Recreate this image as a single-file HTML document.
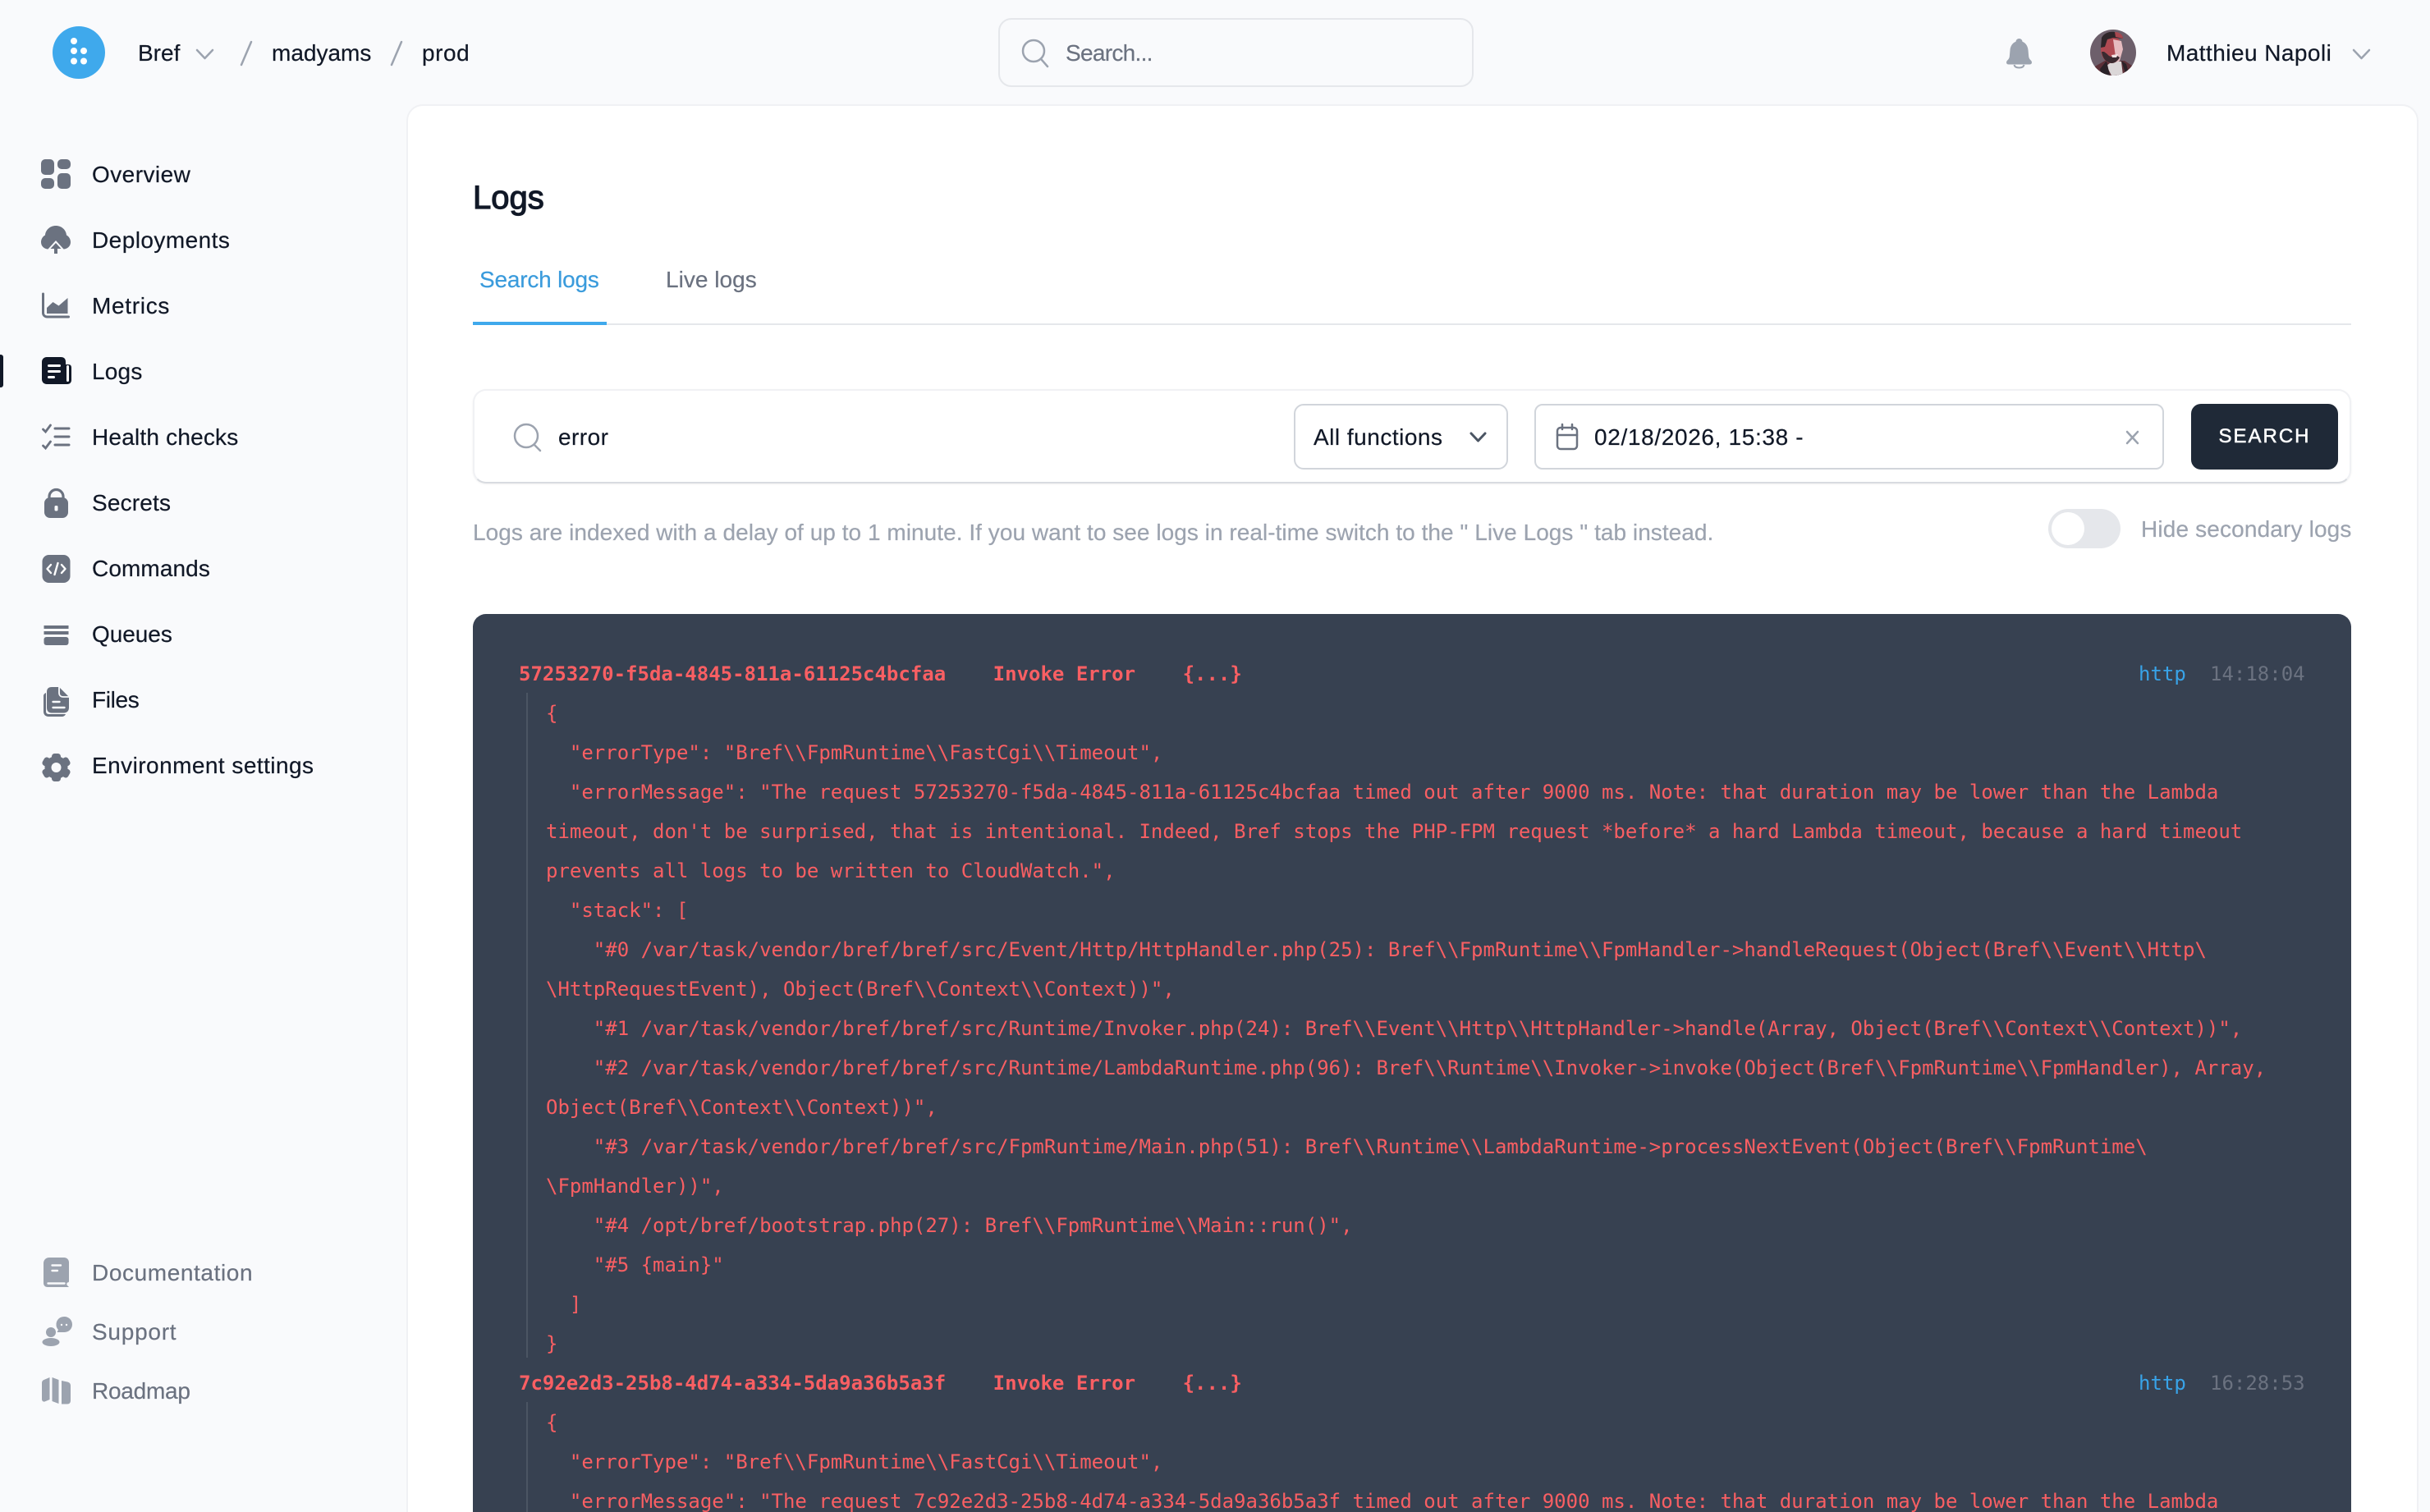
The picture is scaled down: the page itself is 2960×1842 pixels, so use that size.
<!DOCTYPE html>
<html lang="en"><head><meta charset="utf-8"><title>Logs</title>
<style>
html,body{margin:0;padding:0;width:2960px;height:1842px;overflow:hidden;background:#f9fafc;font-family:"Liberation Sans",sans-serif;color:#111827}
#w{position:relative;width:2960px;height:1842px;overflow:hidden}
.t{position:absolute;white-space:pre;line-height:40px;height:40px;font-size:28px;letter-spacing:.45px;-webkit-text-stroke:.2px currentColor}
.b{position:absolute;box-sizing:border-box}
#ic{position:absolute;left:0;top:0;z-index:5}
.g{color:#6b7280}
.mono{position:absolute;font:24px/48px "DejaVu Sans Mono","Liberation Mono",monospace;color:#f95f63;white-space:pre;margin:0}
.mono b{font-weight:700}
.gap{display:inline-block;width:57.5px}
.r{position:absolute;font:24px/48px "DejaVu Sans Mono","Liberation Mono",monospace;white-space:pre}
</style></head><body><div id="w">
<div class="b" style="left:495px;top:127px;width:2451px;height:1715px;background:#fff;border:2px solid #f0f1f4;border-bottom:0;border-radius:20px 20px 0 0"></div>

<div class="t" style="left:168px;top:45px;letter-spacing:0">Bref</div>
<div class="t" style="left:331px;top:45px;letter-spacing:0">madyams</div>
<div class="t" style="left:514px;top:45px;letter-spacing:.55px">prod</div>
<div class="b" style="left:1216px;top:22px;width:579px;height:84px;border:2px solid #e5e7eb;border-radius:16px"></div>
<div class="t g" style="left:1298px;top:45px;letter-spacing:-.7px">Search...</div>
<div class="t" style="left:2639px;top:45px">Matthieu Napoli</div>

<div class="t" style="left:112px;top:193px">Overview</div>
<div class="t" style="left:112px;top:273px">Deployments</div>
<div class="t" style="left:112px;top:353px;letter-spacing:.7px">Metrics</div>
<div class="t" style="left:112px;top:433px;letter-spacing:.2px">Logs</div>
<div class="t" style="left:112px;top:513px;letter-spacing:.2px">Health checks</div>
<div class="t" style="left:112px;top:593px;letter-spacing:.17px">Secrets</div>
<div class="t" style="left:112px;top:673px;letter-spacing:.1px">Commands</div>
<div class="t" style="left:112px;top:753px;letter-spacing:-.05px">Queues</div>
<div class="t" style="left:112px;top:833px;letter-spacing:-.35px">Files</div>
<div class="t" style="left:112px;top:913px">Environment settings</div>
<div class="t g" style="left:112px;top:1531px;letter-spacing:.6px">Documentation</div>
<div class="t g" style="left:112px;top:1603px;letter-spacing:.75px">Support</div>
<div class="t g" style="left:112px;top:1675px;letter-spacing:-.25px">Roadmap</div>
<div class="b" style="left:0;top:432px;width:4px;height:40px;background:#111827;border-radius:0 3px 3px 0"></div>

<div class="t" style="left:576px;top:221px;font-size:40px;letter-spacing:0;-webkit-text-stroke:1.2px #111827">Logs</div>
<div class="t" style="left:584px;top:321px;color:#3a9bdc;letter-spacing:-.2px">Search logs</div>
<div class="t g" style="left:811px;top:321px;letter-spacing:.03px">Live logs</div>
<div class="b" style="left:576px;top:394px;width:2288px;height:2px;background:#e5e7eb"></div>
<div class="b" style="left:576px;top:392px;width:163px;height:4px;background:#3fa9ec"></div>

<div class="b" style="left:576px;top:474px;width:2288px;height:115px;background:#fff;border:2px solid #f0f1f4;border-bottom-color:#d8dbe0;border-radius:16px;box-shadow:0 1px 2px rgba(0,0,0,.06)"></div>
<div class="t" style="left:680px;top:513px">error</div>
<div class="b" style="left:1576px;top:492px;width:261px;height:80px;border:2px solid #d1d5db;border-radius:12px"></div>
<div class="t" style="left:1600px;top:513px;letter-spacing:.5px">All functions</div>
<div class="b" style="left:1869px;top:492px;width:767px;height:80px;border:2px solid #d1d5db;border-radius:10px"></div>
<div class="t" style="left:1942px;top:513px;letter-spacing:.65px">02/18/2026, 15:38 -</div>
<div class="b" style="left:2669px;top:492px;width:179px;height:80px;background:#1f2937;border-radius:12px"></div>
<div class="t" style="left:2669px;width:179px;text-align:center;top:512px;color:#fff;font-size:24px;letter-spacing:2px;-webkit-text-stroke:.5px #fff">SEARCH</div>

<div class="t" style="left:576px;top:629px;color:#9ca3af;letter-spacing:.04px">Logs are indexed with a delay of up to 1 minute. If you want to see logs in real-time switch to the " Live Logs " tab instead.</div>
<div class="b" style="left:2495px;top:620px;width:88px;height:48px;background:#e5e7eb;border-radius:24px"></div>
<div class="b" style="left:2499px;top:624px;width:40px;height:40px;background:#fff;border-radius:50%"></div>
<div class="t" style="left:2608px;top:625px;color:#9ca3af;letter-spacing:.15px">Hide secondary logs</div>

<div class="b" style="left:576px;top:748px;width:2288px;height:1094px;background:#374151;border-radius:16px 16px 0 0"></div>
<div class="b" style="left:641px;top:844px;width:2px;height:810px;background:#4b5563"></div>
<div class="b" style="left:641px;top:1708px;width:2px;height:134px;background:#4b5563"></div>

<pre class="mono" style="left:632px;top:797px"><b>57253270-f5da-4845-811a-61125c4bcfaa<span class="gap"></span>Invoke Error<span class="gap"></span>{...}</b></pre>
<pre class="mono" style="left:665px;top:845px">{
  "errorType": "Bref\\FpmRuntime\\FastCgi\\Timeout",
  "errorMessage": "The request 57253270-f5da-4845-811a-61125c4bcfaa timed out after 9000 ms. Note: that duration may be lower than the Lambda
timeout, don't be surprised, that is intentional. Indeed, Bref stops the PHP-FPM request *before* a hard Lambda timeout, because a hard timeout
prevents all logs to be written to CloudWatch.",
  "stack": [
    "#0 /var/task/vendor/bref/bref/src/Event/Http/HttpHandler.php(25): Bref\\FpmRuntime\\FpmHandler-&gt;handleRequest(Object(Bref\\Event\\Http\
\HttpRequestEvent), Object(Bref\\Context\\Context))",
    "#1 /var/task/vendor/bref/bref/src/Runtime/Invoker.php(24): Bref\\Event\\Http\\HttpHandler-&gt;handle(Array, Object(Bref\\Context\\Context))",
    "#2 /var/task/vendor/bref/bref/src/Runtime/LambdaRuntime.php(96): Bref\\Runtime\\Invoker-&gt;invoke(Object(Bref\\FpmRuntime\\FpmHandler), Array,
Object(Bref\\Context\\Context))",
    "#3 /var/task/vendor/bref/bref/src/FpmRuntime/Main.php(51): Bref\\Runtime\\LambdaRuntime-&gt;processNextEvent(Object(Bref\\FpmRuntime\
\FpmHandler))",
    "#4 /opt/bref/bootstrap.php(27): Bref\\FpmRuntime\\Main::run()",
    "#5 {main}"
  ]
}</pre>
<pre class="mono" style="left:632px;top:1661px"><b>7c92e2d3-25b8-4d74-a334-5da9a36b5a3f<span class="gap"></span>Invoke Error<span class="gap"></span>{...}</b></pre>
<pre class="mono" style="left:665px;top:1709px;height:133px;overflow:hidden">{
  "errorType": "Bref\\FpmRuntime\\FastCgi\\Timeout",
  "errorMessage": "The request 7c92e2d3-25b8-4d74-a334-5da9a36b5a3f timed out after 9000 ms. Note: that duration may be lower than the Lambda</pre>
<div class="r" style="left:2605px;top:797px;color:#38a3e8">http</div>
<div class="r" style="left:2692px;top:797px;color:#6b7280">14:18:04</div>
<div class="r" style="left:2605px;top:1661px;color:#38a3e8">http</div>
<div class="r" style="left:2692px;top:1661px;color:#6b7280">16:28:53</div>

<svg id="ic" width="2960" height="1842" viewBox="0 0 2960 1842">
<defs><clipPath id="av"><circle cx="2574" cy="64" r="28"/></clipPath></defs>
<circle cx="96" cy="64" r="32" fill="#3fa9ec"/>
<g fill="#fff"><circle cx="90" cy="50" r="4"/><circle cx="90" cy="62" r="4"/><circle cx="102" cy="62" r="4"/><circle cx="90" cy="74.500" r="4"/><circle cx="102" cy="74.500" r="4"/></g>
<g fill="none" stroke="#9ca3af" stroke-width="2.500" stroke-linecap="round" stroke-linejoin="round">
<path d="M240 61l9.500 10 9.500-10"/><path d="M306 51l-12 28"/><path d="M489 51l-12 28"/>
<path d="M2867 61l9.500 10 9.500-10"/>
<circle cx="1259" cy="62" r="13"/><path d="M1269 73l7 8"/>
<circle cx="641" cy="531" r="14"/><path d="M651 542l7 7"/>
<path d="M2591 526l13 14M2604 526l-13 14"/>
</g>
<path d="M1792 528l8.500 9 8.500-9" fill="none" stroke="#4b5563" stroke-width="3" stroke-linecap="round" stroke-linejoin="round"/>
<g fill="none" stroke="#6b7280" stroke-width="2.500" stroke-linecap="round"><rect x="1897" y="521" width="24" height="26" rx="4"/><path d="M1897 530h24M1903 517v6M1915 517v6"/></g>
<g fill="#6b7280">
<rect x="50" y="194" width="16" height="19" rx="5"/><rect x="70" y="194" width="16" height="12" rx="5"/><rect x="50" y="217" width="16" height="13" rx="5"/><rect x="70" y="211" width="16" height="19" rx="5"/>
<path d="M68 275c-7 0-12.500 5-13 11.500-3 1.500-5 5-5 8.500 0 5 4 8.500 9 8.500h18c5 0 9-3.500 9-8.500 0-3.500-2-7-5-8.500-.5-6.500-6-11.500-13-11.500z"/>
</g>
<path d="M58 304l10-11 10 11z" fill="#f9fafc"/><path d="M68 296l6.500 7h-4.500v6h-4v-6h-4.500z" fill="#6b7280"/>
<path d="M52.500 358v23c0 3 2 5 5 5h26" fill="none" stroke="#6b7280" stroke-width="3" stroke-linecap="round"/>
<path d="M57 382v-7l7.500-7 7 4.500 11-9.500v19z" fill="#6b7280"/>
<path d="M57 435h17c4 0 6 2 6 6v3h3c3 0 4 1.500 4 4v15c0 3-2 5-5 5H57c-3.500 0-6-2.500-6-6v-21c0-3.500 2.500-6 6-6z" fill="#111827"/>
<g fill="#fff"><rect x="58" y="444" width="16" height="3" rx="1.500"/><rect x="58" y="451" width="16" height="3" rx="1.500"/><rect x="58" y="458" width="9" height="3" rx="1.500"/><rect x="81" y="445" width="3" height="20" rx="1.500"/></g>
<g fill="none" stroke="#6b7280" stroke-width="3" stroke-linecap="round"><path d="M67 522h17M67 532h17M67 542h17"/><path d="M52.500 523l3 3 6-8M52.500 543l3 3 6-8" stroke-width="2.800"/></g>
<path d="M60 609v-4a8.500 8.500 0 0 1 17 0v4" fill="none" stroke="#6b7280" stroke-width="3.200"/>
<rect x="54" y="606" width="29" height="25" rx="7" fill="#6b7280"/><rect x="66.500" y="616" width="4" height="6.500" rx="1.500" fill="#f9fafc"/>
<rect x="51.500" y="676" width="34" height="34" rx="8" fill="#6b7280"/>
<path d="M62 688l-4.500 5 4.500 5M75 688l4.500 5-4.500 5M70.500 686l-4 14" fill="none" stroke="#fff" stroke-width="2.400" stroke-linecap="round" stroke-linejoin="round"/>
<g fill="#6b7280"><rect x="53.500" y="762" width="30" height="4"/><rect x="53.500" y="769" width="30" height="4"/><rect x="53.500" y="776" width="30" height="10" rx="3"/>
<path d="M53 848c0-2 1-3 3-4v22c0 3 1 4 4 4h20c-1 2-2.500 3-5 3H59c-3.500 0-6-2.500-6-6z"/>
<path d="M63 837h9l12 12v13c0 4-2.500 6.500-6.500 6.500H63c-4 0-6-2.500-6-6.500V843c0-4 2-6 6-6z"/></g>
<path d="M72 837v7c0 3 2 5 5 5h7" fill="none" stroke="#f9fafc" stroke-width="1.800"/>
<path d="M64.500 855h8M64.500 862h14" stroke="#f9fafc" stroke-width="2.400" stroke-linecap="round"/>
<g fill="#6b7280" transform="translate(68.500 935)">
<circle r="14"/><rect x="-5.500" y="-17" width="11" height="34" rx="3.500"/><rect x="-5.500" y="-18" width="11" height="36" rx="3.500" transform="rotate(60)"/><rect x="-5.500" y="-18" width="11" height="36" rx="3.500" transform="rotate(120)"/></g>
<circle cx="68.500" cy="935" r="6" fill="#f9fafc"/>
<path d="M60 1532h18c3.500 0 6 2.500 6 6v23c0 1-1 1.500-2 1.500-1 1-1 2.500 0 3.500l2 2H58c-3 0-5-2-5-5v-24c0-4 3-7 7-7z" fill="#9ca3af"/>
<path d="M58.500 1563.500h20M63.500 1541.500h10.500M63.500 1548h6.500" stroke="#f9fafc" stroke-width="2.400" stroke-linecap="round"/>
<g fill="#9ca3af"><circle cx="62" cy="1623" r="6"/><ellipse cx="62" cy="1635" rx="10.500" ry="5"/><path d="M78.500 1604a9.500 9.500 0 1 1 0 19h-9l1.500-3a9.500 9.500 0 0 1 7.500-16z"/></g>
<circle cx="75" cy="1614" r="1.200" fill="#f9fafc"/><circle cx="81" cy="1614" r="1.200" fill="#f9fafc"/>
<g fill="#9ca3af"><path d="M60.500 1678v27l-6 2.500c-2 .5-3.500-1-3.500-3v-20c0-1.500 1-3 2.500-3.500z"/><path d="M63.500 1678l8 3v29l-8-3z"/><path d="M75 1682l7 1.500c2.500.5 4 2 4 4.500v18c0 3-1.500 4.500-4 4.500h-7z"/></g>
<circle cx="2459.500" cy="51" r="4" fill="#9ca3af"/>
<path d="M2459.500 50c-6.500 0-10.500 5-11 11l-.7 8c-.2 2-1.500 3.500-3 5-1.500 2-.8 4.500 2 4.500h25.400c2.800 0 3.500-2.500 2-4.500-1.500-1.500-2.800-3-3-5l-.7-8c-.5-6-4.500-11-11-11z" fill="#9ca3af"/>
<path d="M2453.500 79c.5 2.500 3 3.500 6 3.500s5.500-1 6-3.500" fill="none" stroke="#9ca3af" stroke-width="2"/>
<g clip-path="url(#av)"><rect x="2546" y="36" width="56" height="56" fill="#6d5f6b"/>
<path d="M2546 92l4-10 14-8 24 0 12 8 2 10z" fill="#5c3038"/>
<path d="M2566 80l8-6 10 1 2 17h-14z" fill="#dbd7d8"/>
<path d="M2558 84l8-10 4 18h-10zM2590 92l-6-18 6 4 4 14z" fill="#2a2228"/>
<ellipse cx="2572" cy="60" rx="13" ry="17" fill="#b04a52"/>
<path d="M2574 48l10 2 2 10-4 14-4 2z" fill="#e6bcc0"/>
<path d="M2560 63c1 8 5 13 12 14 4 0 8-3 10-7l-3-2c-4 2-9 2-12-2l-4-3z" fill="#3a2a30"/>
<path d="M2559 58l1-12c3-6 10-8 16-7 6 1 10 4 10 8l-12-1-7 2-3 9z" fill="#2e2529"/>
<path d="M2576 39c5 0 10 3 10 8l-9-2z" fill="#a8474f"/>
<path d="M2572 67l8-1-2 4h-5z" fill="#f0e4e4"/></g>
</svg>
</div></body></html>
